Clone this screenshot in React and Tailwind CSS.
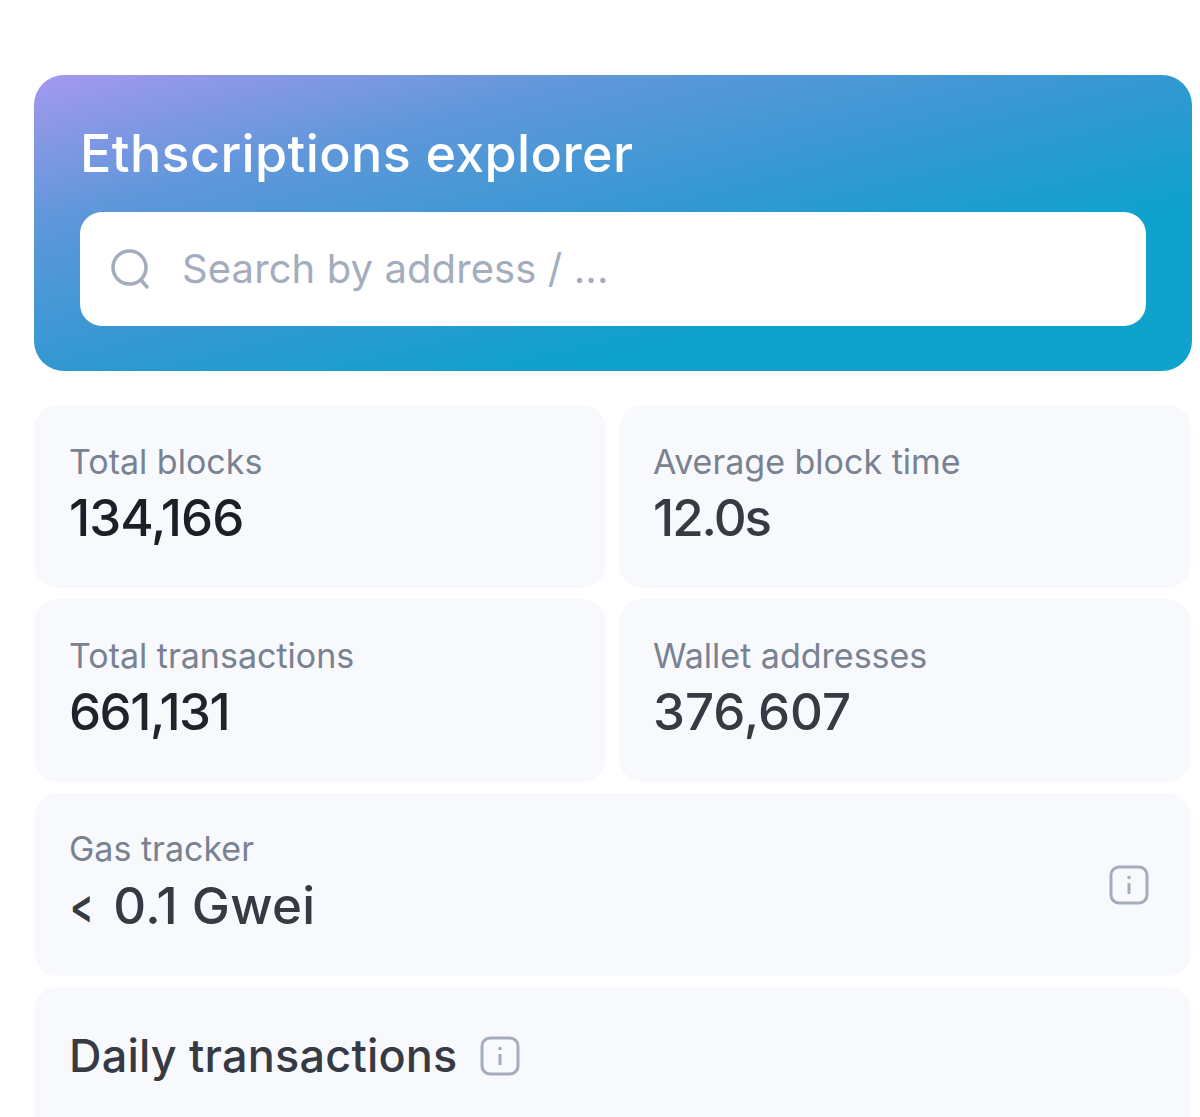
function InfoIcon({ className }) {
  return (
    <svg className={className} viewBox="0 0 40 40" fill="none">
      <rect x="2" y="2" width="36" height="36" rx="8" stroke="#a3adbd" strokeWidth="3" />
      <circle cx="20" cy="12.5" r="1.8" fill="#a3adbd" />
      <path d="M20 18v11" stroke="#a3adbd" strokeWidth="3" />
    </svg>
  );
}

function StatCard({ label, value, valueClass, padClass = "pl-[35px]" }) {
  return (
    <div className={`h-full rounded-[24px] bg-[#f8f9fd] pt-[36px] ${padClass}`}>
      <div className="text-[34px] leading-[42px] text-[#788291] font-normal">{label}</div>
      <div className={`text-[51px] leading-[70px] font-medium ${valueClass}`}>{value}</div>
    </div>
  );
}

export default function App() {
  return (
    <div className="h-[1117px] overflow-hidden bg-white pt-[75px] pl-[34px] pr-[8px] font-['Inter',sans-serif]">
      <div className="h-[296px] rounded-[30px] bg-[linear-gradient(to_bottom_right,#a598f0_0%,#5f97da_25%,#3398d2_50%,#0ea2cc_72%)] px-[46px] pt-[49px]">
        <h1 className="text-[52px] leading-[60px] font-medium text-white tracking-[0.4px]">Ethscriptions explorer</h1>
        <div className="mt-[28px] flex h-[114px] items-center rounded-[22px] bg-white pl-[30px]">
          <svg className="h-[42px] w-[42px]" viewBox="0 0 42 42" fill="none" stroke="#a3adbd" strokeWidth="3.5">
            <circle cx="19.5" cy="19.5" r="16.5" />
            <path d="M31 32l6 7" strokeLinecap="round" />
          </svg>
          <span className="ml-[30px] text-[40px] tracking-[0.1px] text-[#a3adbd]">Search by address / ...</span>
        </div>
      </div>

      <div className="mt-[34px] grid grid-cols-[572px_572px] auto-rows-[183px] gap-x-[13px] gap-y-[11px]">
        <StatCard label="Total blocks" value="134,166" valueClass="tracking-[-1px] text-[#1b1f28]" />
        <StatCard label="Average block time" value="12.0s" valueClass="tracking-[-2px] text-[#353a43]" padClass="pl-[34px]" />
        <StatCard label="Total transactions" value="661,131" valueClass="tracking-[-1.5px] text-[#1f232b]" />
        <StatCard label="Wallet addresses" value="376,607" valueClass="tracking-[0px] text-[#353a43]" padClass="pl-[34px]" />
        <div className="col-span-2 flex justify-between rounded-[24px] bg-[#f8f9fd] pr-[42px]">
          <div className="pl-[35px] pt-[35px]">
            <div className="text-[34px] leading-[42px] text-[#788291]">Gas tracker</div>
            <div className="flex items-center gap-[11px] pl-[1px] text-[51px] leading-[72px] font-medium tracking-[0.3px] text-[#353a43]">
              <span className="inline-block origin-left scale-x-[0.72] text-[48px] font-semibold tracking-[0px]">&lt;</span>
              <span>0.1 Gwei</span>
            </div>
          </div>
          <InfoIcon className="h-[40px] w-[40px] self-center" />
        </div>
        <div className="col-span-2 rounded-[24px] bg-[#f8f9fd] pl-[35px] pt-[40px]">
          <div className="flex items-center gap-[22px]">
            <span className="text-[45px] leading-[58px] font-medium tracking-[0.2px] text-[#353a43]">Daily transactions</span>
            <InfoIcon className="h-[40px] w-[40px]" />
          </div>
        </div>
      </div>
    </div>
  );
}
